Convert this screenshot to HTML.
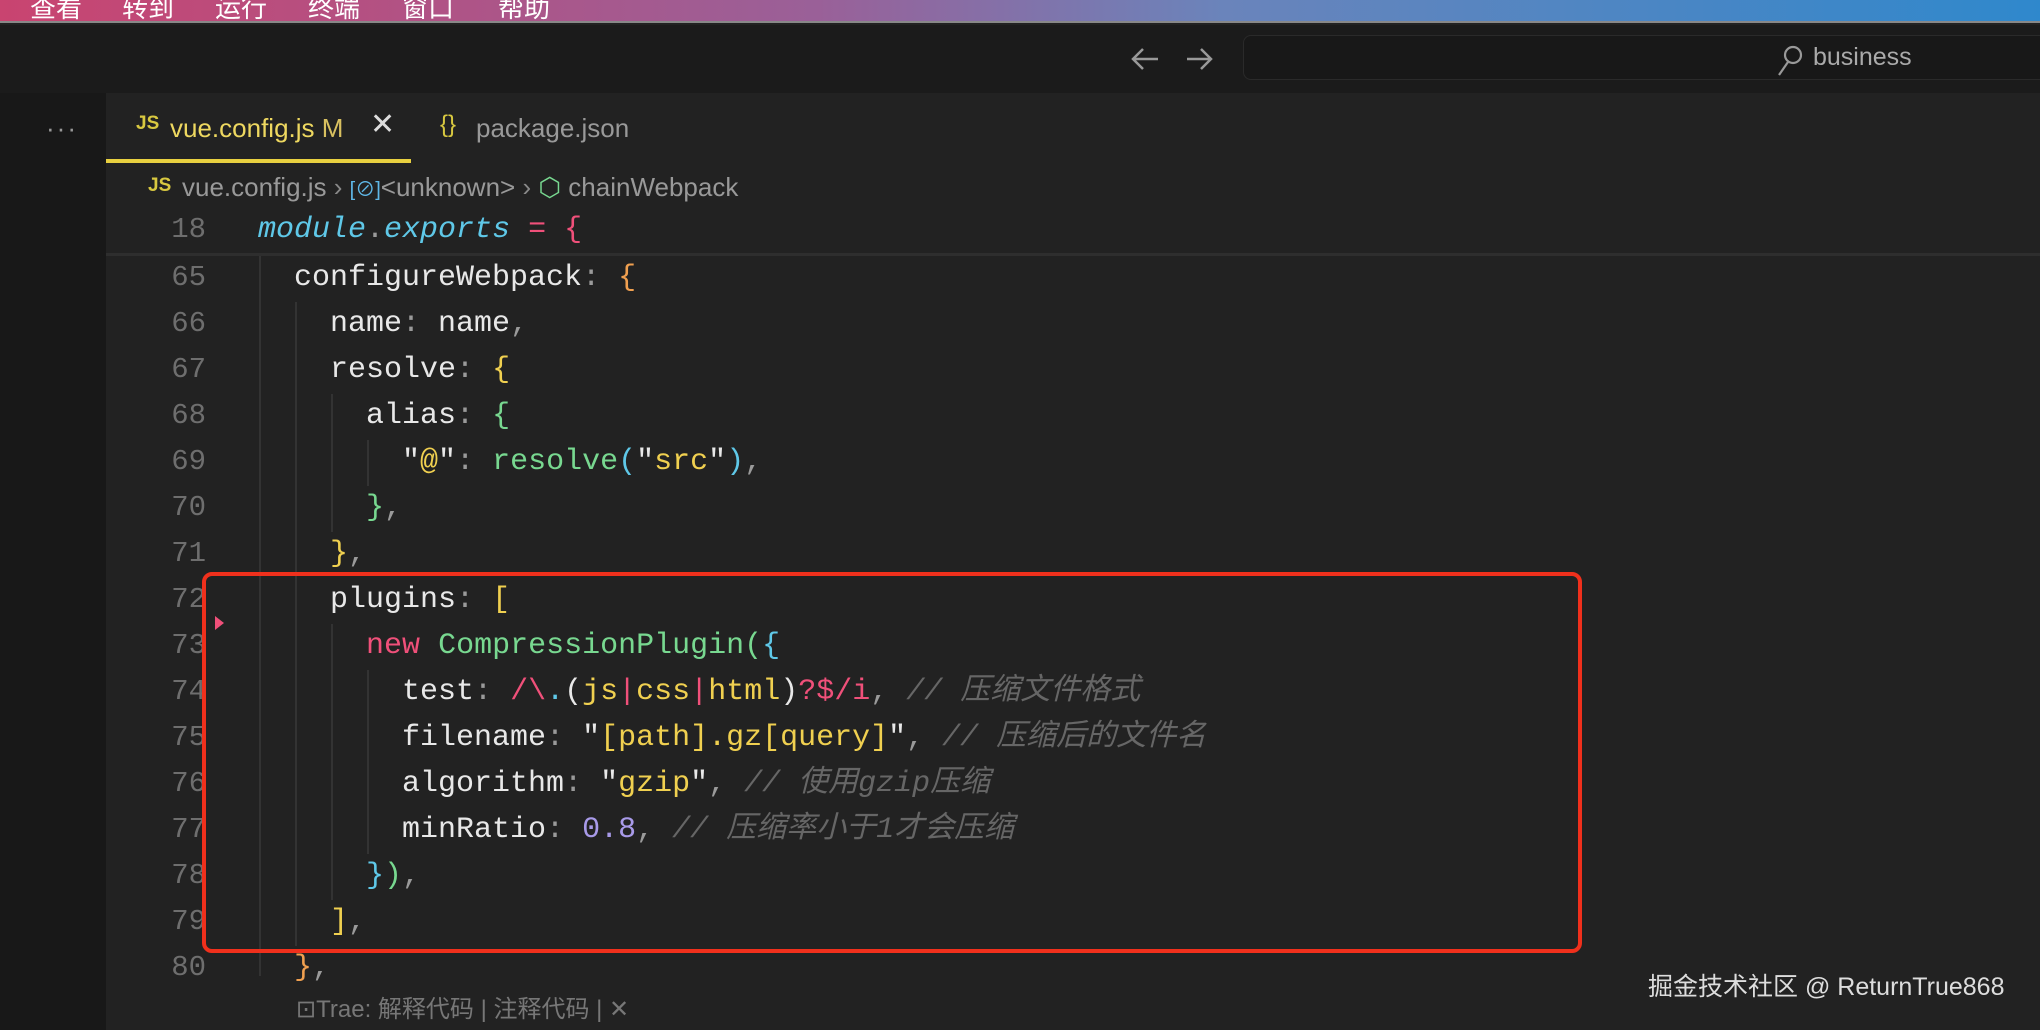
<!DOCTYPE html>
<html style="width:2040px;height:1030px;overflow:hidden"><head><meta charset="utf-8"><style>
*{margin:0;padding:0;box-sizing:border-box}
body{width:2040px;height:1030px;overflow:hidden;background:#222;font-family:"Liberation Sans","Noto Sans CJK SC",sans-serif;position:relative}
.top{position:absolute;left:0;top:0;width:2040px;height:23px;background:linear-gradient(90deg,#c94470 0%,#9a6098 40%,#6a84bb 60%,#2f88cc 100%);border-bottom:2px solid #888;overflow:hidden}
.top span{position:absolute;top:-12px;color:#fff;font-size:26px}
.title{position:absolute;left:0;top:25px;width:2040px;height:68px;background:#1b1b1b;overflow:hidden}
.act{position:absolute;left:0;top:93px;width:106px;bottom:0;background:#181818}
.tabs{position:absolute;left:106px;top:93px;width:1934px;height:70px;background:#222}
.mono{font-family:"Liberation Mono","Noto Sans CJK SC",monospace}
.code{position:absolute;left:0;top:255px;width:2040px;height:740px;overflow:hidden;font-size:30px;line-height:46px;white-space:pre;color:#e8e8e8}
.ln{position:absolute;left:140px;width:66px;text-align:right;color:#6e6e6e;font-size:29px}
.l{position:absolute;left:258px}
.p{color:#9a9a9a}.o{color:#f0a050}.y{color:#f0d050}.g{color:#78d890}.b{color:#5fc8e8}.k{color:#f0507a}.c{color:#666;font-style:italic}.n{color:#a89ae8}
.guide{position:absolute;width:2px;background:#333}
</style></head><body>
<div class="top"><span style="left:30px">查看</span><span style="left:122px">转到</span><span style="left:215px">运行</span><span style="left:308px">终端</span><span style="left:402px">窗口</span><span style="left:498px">帮助</span></div>
<div class="title">
<svg style="position:absolute;left:1130px;top:20px" width="90" height="30" stroke="#999" stroke-width="2.5" fill="none"><path d="M28 14H4M13 4L3 14L13 24"/><path d="M57 14H80M71 4L81 14L71 24"/></svg>
<div style="position:absolute;left:1243px;top:10px;width:820px;height:45px;border:1px solid #2a2a2a;border-radius:8px;background:#181818"></div>
<svg style="position:absolute;left:1775px;top:19px" width="30" height="32" stroke="#999" stroke-width="2.2" fill="none"><circle cx="18" cy="11" r="8"/><path d="M13 18L4 31"/></svg>
<div style="position:absolute;top:18px;color:#aaa;font-size:25px;width:100px;left:1813px">business</div>
</div>
<div class="act"><div style="position:absolute;left:46px;top:20px;color:#999;font-size:26px;letter-spacing:2px">···</div></div>
<div class="tabs">
<div style="position:absolute;left:0;top:0;width:305px;height:70px;background:#222;border-bottom:4px solid #e8d040"></div>
<div style="position:absolute;left:30px;top:20px;color:#d8c840;font-size:19px;font-weight:bold">JS</div>
<div style="position:absolute;left:64px;top:20px;color:#eed860;font-size:26px">vue.config.js <span style="color:#d8c060">M</span></div>
<div style="position:absolute;left:264px;top:14px;color:#ddd;font-size:30px">✕</div>
<div style="position:absolute;left:334px;top:18px;color:#d8c840;font-size:24px">{}</div>
<div style="position:absolute;left:370px;top:20px;color:#999;font-size:26px">package.json</div>
</div>
<div style="position:absolute;left:148px;top:175px;color:#d8c840;font-size:19px;font-weight:bold">JS</div>
<div style="position:absolute;left:182px;top:172px;color:#999;font-size:26px;white-space:nowrap">vue.config.js <span style="color:#888">›</span> <span style="color:#5fb8e8;font-size:20px">[⊘]</span>&lt;unknown&gt; <span style="color:#888">›</span> <span style="color:#78d890">⬡</span> chainWebpack</div>
<div style="position:absolute;left:106px;top:253px;width:1934px;height:3px;background:#2e2e2e"></div>
<div class="guide" style="left:259px;top:256px;height:720px"></div>
<div class="guide" style="left:295px;top:302px;height:644px"></div>
<div class="guide" style="left:331px;top:394px;height:138px"></div>
<div class="guide" style="left:331px;top:624px;height:276px"></div>
<div class="guide" style="left:367px;top:440px;height:46px"></div>
<div class="guide" style="left:367px;top:670px;height:184px"></div>
<div class="mono" style="position:absolute;left:0;top:207px;width:2040px;height:46px;font-size:30px;line-height:46px;white-space:pre;color:#e8e8e8">
<div class="ln" style="top:0">18</div><div class="l" style="top:0"><span class="b" style="font-style:italic">module</span><span class="p">.</span><span class="b" style="font-style:italic">exports</span> <span class="k">=</span> <span class="k">{</span></div>
</div>
<div class="code mono">
<div class="ln" style="top:0">65</div><div class="l" style="top:0">  configureWebpack<span class="p">:</span> <span class="o">{</span></div>
<div class="ln" style="top:46px">66</div><div class="l" style="top:46px">    name<span class="p">:</span> name<span class="p">,</span></div>
<div class="ln" style="top:92px">67</div><div class="l" style="top:92px">    resolve<span class="p">:</span> <span class="y">{</span></div>
<div class="ln" style="top:138px">68</div><div class="l" style="top:138px">      alias<span class="p">:</span> <span class="g">{</span></div>
<div class="ln" style="top:184px">69</div><div class="l" style="top:184px">        "<span class="y">@</span>"<span class="p">:</span> <span class="g">resolve</span><span class="b">(</span>"<span class="y">src</span>"<span class="b">)</span><span class="p">,</span></div>
<div class="ln" style="top:230px">70</div><div class="l" style="top:230px">      <span class="g">}</span><span class="p">,</span></div>
<div class="ln" style="top:276px">71</div><div class="l" style="top:276px">    <span class="y">}</span><span class="p">,</span></div>
<div class="ln" style="top:322px">72</div><div class="l" style="top:322px">    plugins<span class="p">:</span> <span class="y">[</span></div>
<div class="ln" style="top:368px">73</div><div class="l" style="top:368px">      <span class="k">new</span> <span class="g">CompressionPlugin</span><span class="g">(</span><span class="b">{</span></div>
<div class="ln" style="top:414px">74</div><div class="l" style="top:414px">        test<span class="p">:</span> <span class="k">/\</span><span class="b">.</span>(<span class="y">js</span><span class="k">|</span><span class="y">css</span><span class="k">|</span><span class="y">html</span>)<span class="k">?$/i</span><span class="p">,</span> <span class="c">// 压缩文件格式</span></div>
<div class="ln" style="top:460px">75</div><div class="l" style="top:460px">        filename<span class="p">:</span> "<span class="y">[path].gz[query]</span>"<span class="p">,</span> <span class="c">// 压缩后的文件名</span></div>
<div class="ln" style="top:506px">76</div><div class="l" style="top:506px">        algorithm<span class="p">:</span> "<span class="y">gzip</span>"<span class="p">,</span> <span class="c">// 使用gzip压缩</span></div>
<div class="ln" style="top:552px">77</div><div class="l" style="top:552px">        minRatio<span class="p">:</span> <span class="n">0.8</span><span class="p">,</span> <span class="c">// 压缩率小于1才会压缩</span></div>
<div class="ln" style="top:598px">78</div><div class="l" style="top:598px">      <span class="b">}</span><span class="g">)</span><span class="p">,</span></div>
<div class="ln" style="top:644px">79</div><div class="l" style="top:644px">    <span class="y">]</span><span class="p">,</span></div>
<div class="ln" style="top:690px">80</div><div class="l" style="top:690px">  <span class="o">}</span><span class="p">,</span></div>
</div>
<svg style="position:absolute;left:214px;top:615px" width="12" height="16"><path d="M1 1L10 8L1 15Z" fill="#f0507a"/></svg>
<div style="position:absolute;left:202px;top:572px;width:1380px;height:381px;border:4px solid #f0301c;border-radius:10px"></div>
<div style="position:absolute;left:296px;top:996px;height:28px;line-height:28px;overflow:hidden;color:#777;font-size:24px;white-space:nowrap">⊡Trae: 解释代码 | 注释代码 | ✕</div>
<div style="position:absolute;left:1648px;top:972px;line-height:30px;color:#ddd;font-size:25px;white-space:nowrap">掘金技术社区 @ ReturnTrue868</div>
</body></html>
